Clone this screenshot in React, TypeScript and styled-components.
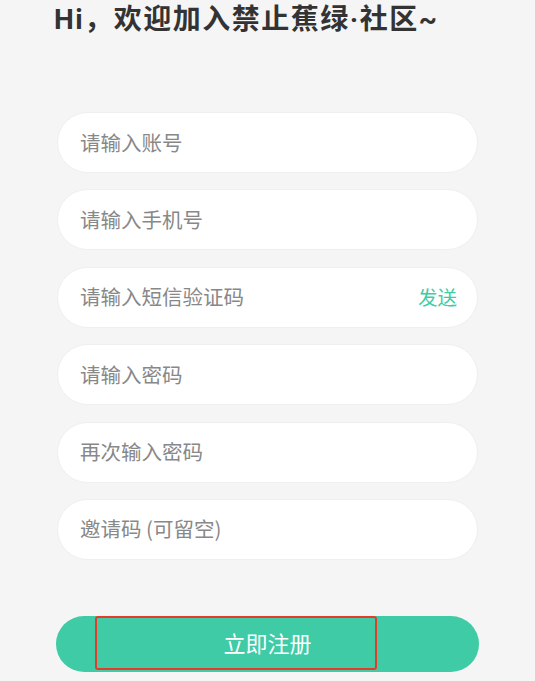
import styled, { createGlobalStyle } from "styled-components";

const GlobalStyle = createGlobalStyle`
  html, body {
    margin: 0;
    padding: 0;
    background: #f5f5f5;
  }
  body {
    font-family: "Noto Sans CJK SC", "Noto Sans", sans-serif;
  }
`;

const Page = styled.div`
  box-sizing: border-box;
  width: 535px;
  min-height: 681px;
  padding: 0 56px;
  background: #f5f5f5;
`;

const Title = styled.h1`
  margin: 0;
  margin-left: -2px;
  font-family: Roboto, "Noto Sans CJK SC", sans-serif;
  font-size: 28px;
  letter-spacing: 1.5px;
  line-height: 40px;
  font-weight: 700;
  color: #333;
  white-space: nowrap;
`;

const Form = styled.div`
  margin-top: 72px;
  display: flex;
  flex-direction: column;
  gap: 16.4px;
  padding: 0 1px;
`;

const Field = styled.div`
  box-sizing: border-box;
  height: 61px;
  border-radius: 31px;
  background: #fff;
  border: 1px solid #efefef;
  display: flex;
  align-items: center;
  padding: 0 20px 2px 22px;
`;

const Input = styled.input`
  flex: 1;
  min-width: 0;
  border: none;
  outline: none;
  background: transparent;
  font-family: inherit;
  font-size: 20.5px;
  color: #333;
  padding: 0;
  &::placeholder {
    color: #888;
  }
`;

const SendLink = styled.span`
  font-size: 19.5px;
  color: #3ecba6;
`;

const ButtonWrap = styled.div`
  position: relative;
  margin-top: 56px;
`;

const SubmitButton = styled.button`
  display: block;
  width: 100%;
  height: 56px;
  border: none;
  border-radius: 28px;
  background: #3ecba6;
  color: #fff;
  font-family: inherit;
  font-size: 22px;
  padding: 0 0 3px;
  cursor: pointer;
`;

const Highlight = styled.div`
  position: absolute;
  left: 39px;
  top: 0;
  width: 282px;
  height: 54px;
  box-sizing: border-box;
  border: 2px solid #e53b2a;
  border-radius: 3px;
  pointer-events: none;
`;

const fields = [
  { id: "account", placeholder: "请输入账号" },
  { id: "phone", placeholder: "请输入手机号" },
  { id: "sms", placeholder: "请输入短信验证码", send: true },
  { id: "password", placeholder: "请输入密码", type: "password" },
  { id: "confirm", placeholder: "再次输入密码", type: "password" },
  { id: "invite", placeholder: "邀请码 (可留空)" },
];

export default function App() {
  return (
    <>
      <GlobalStyle />
      <Page>
        <Title>Hi，欢迎加入禁止蕉绿·社区~</Title>
        <Form>
          {fields.map((f) => (
            <Field key={f.id}>
              <Input type={f.type || "text"} placeholder={f.placeholder} />
              {f.send && <SendLink>发送</SendLink>}
            </Field>
          ))}
        </Form>
        <ButtonWrap>
          <SubmitButton>立即注册</SubmitButton>
          <Highlight />
        </ButtonWrap>
      </Page>
    </>
  );
}
